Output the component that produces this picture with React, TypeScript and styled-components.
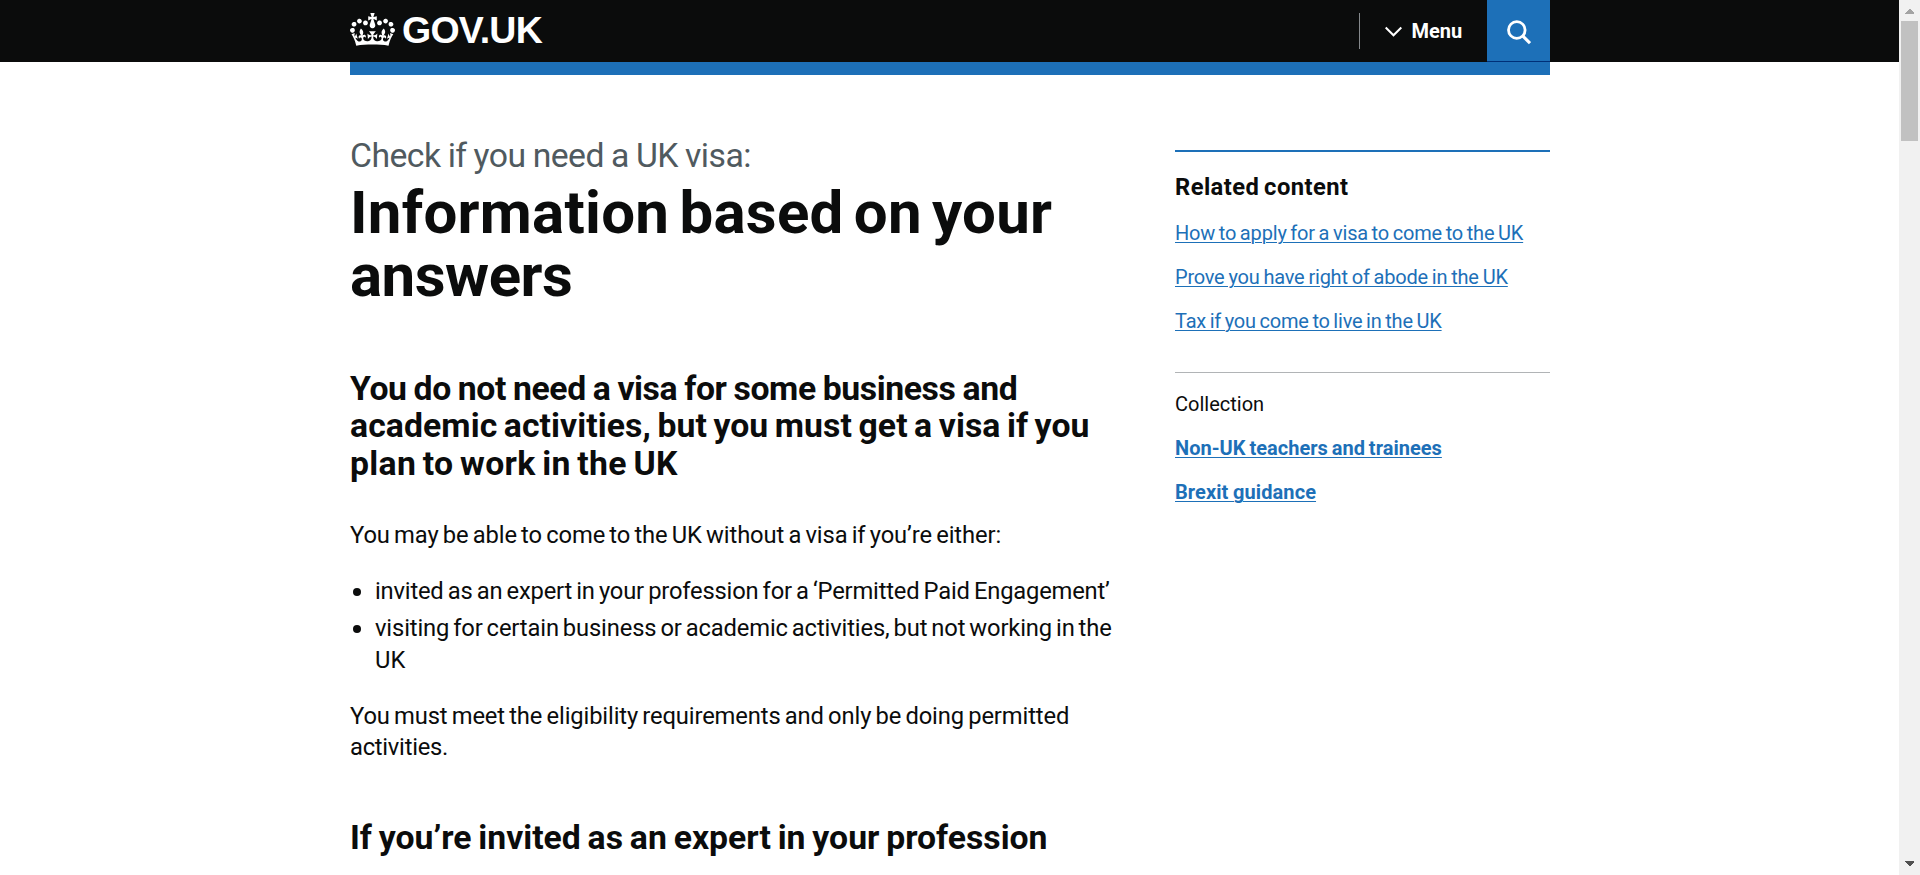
import React from 'react';
import styled, { createGlobalStyle } from 'styled-components';

const ink = '#0b0c0c';
const blue = '#1d70b8';

const GlobalStyle = createGlobalStyle`
  *, *::before, *::after { box-sizing: border-box; }
  body { margin: 0; background: #fff; color: ${ink}; font-family: Roboto, "Liberation Sans", sans-serif; }
  h1, h2, p, ul { margin: 0; padding: 0; font-weight: inherit; }
`;

const Viewport = styled.div`
  display: flex;
  height: 875px;
  overflow: hidden;
`;

const Page = styled.div`
  flex: 1;
  min-width: 0;
`;

const Header = styled.header`
  height: 62px;
  background: ${ink};
`;

const Container = styled.div`
  width: 1200px;
  margin-left: 350px;
`;

const HeaderBar = styled(Container)`
  display: flex;
  align-items: flex-start;
  height: 62px;
  color: #fff;
`;

const HomeLink = styled.a`
  display: flex;
  align-items: flex-start;
  gap: 7px;
  padding-top: 13px;
  color: #fff;
`;

const Wordmark = styled.span`
  font-family: "Liberation Sans", Arial, sans-serif;
  font-size: 37.5px;
  font-weight: 700;
  line-height: 34px;
  letter-spacing: -0.75px;
`;

const Nav = styled.nav`
  display: flex;
  align-items: center;
  height: 62px;
  margin-left: auto;
`;

const MenuButton = styled.div`
  display: flex;
  align-items: center;
  gap: 10px;
  width: 128px;
  height: 36px;
  padding-left: 24.5px;
  border-left: 1px solid #85898c;
  font-size: 20px;
  font-weight: 700;
  line-height: 36px;
`;

const SearchButton = styled.div`
  display: flex;
  align-items: center;
  justify-content: center;
  width: 63px;
  height: 62px;
  padding-top: 3px;
  background: ${blue};
  border-bottom: 1px solid #003078;
`;

const BlueBar = styled(Container)`
  height: 13px;
  background: ${blue};
`;

const Columns = styled(Container)`
  display: flex;
  justify-content: space-between;
`;

const Main = styled.main`
  width: 775px;
  padding-top: 61.5px;
`;

const Sidebar = styled.aside`
  width: 375px;
  padding-top: 75px;
`;

const Line = styled.span<{ $ls?: number; $ws?: number }>`
  display: block;
  white-space: nowrap;
  letter-spacing: ${({ $ls = 0 }) => $ls}px;
  word-spacing: ${({ $ws = 0 }) => $ws}px;
`;

const Caption = styled.p`
  margin-bottom: 8px;
  color: #505a5f;
  font-size: 33.75px;
  line-height: 37.5px;
`;

const Title = styled.h1`
  margin-bottom: 62.5px;
  font-size: 60px;
  font-weight: 700;
  line-height: 62.5px;
`;

const Heading = styled.h2`
  margin-bottom: 37.5px;
  font-size: 33.75px;
  font-weight: 700;
  line-height: 37.5px;
`;

const Paragraph = styled.p<{ $gap: number }>`
  margin-bottom: ${({ $gap }) => $gap}px;
  font-size: 23.75px;
  line-height: 31.25px;
`;

const Bullets = styled.ul`
  display: flex;
  flex-direction: column;
  gap: 6.25px;
  margin-bottom: 25px;
  list-style: none;
  font-size: 23.75px;
  line-height: 31.25px;
`;

const Bullet = styled.li`
  display: flex;
  gap: 14px;
  padding-left: 3px;

  &::before {
    content: '';
    flex: none;
    width: 8px;
    height: 8px;
    margin-top: 12px;
    border-radius: 50%;
    background: ${ink};
  }
`;

const Related = styled.section`
  padding: 20px 0 38px;
  border-top: 2px solid ${blue};
`;

const RelatedTitle = styled.h2`
  margin-bottom: 18px;
  font-size: 23.75px;
  font-weight: 700;
  line-height: 31.25px;
`;

const Collection = styled.section`
  display: flex;
  flex-direction: column;
  gap: 19px;
  padding-top: 19px;
  border-top: 1px solid #b1b4b6;
  font-size: 20px;
  line-height: 25px;
`;

const LinkList = styled.div`
  display: flex;
  flex-direction: column;
  align-items: flex-start;
  gap: 19px;
`;

const SideLink = styled.a<{ $ls: number; $ws: number; $bold?: boolean }>`
  color: ${blue};
  font-size: 20px;
  font-weight: ${({ $bold }) => ($bold ? 700 : 400)};
  line-height: 25px;
  letter-spacing: ${({ $ls }) => $ls}px;
  word-spacing: ${({ $ws }) => $ws}px;
  white-space: nowrap;
  text-decoration: underline;
  text-decoration-thickness: 1px;
  text-underline-offset: 2px;
`;

const Scrollbar = styled.div`
  display: flex;
  flex-direction: column;
  align-items: center;
  width: 21px;
  height: 875px;
  padding: 9px 0;
  background: #f1f1f1;
`;

const Thumb = styled.div`
  width: 17px;
  height: 120px;
  margin: 7px 0 auto;
  background: #c1c1c1;
`;

const ScrollArrow = ({ down }: { down?: boolean }) => (
  <svg width="9" height="5" viewBox="0 0 9 5" shapeRendering="crispEdges">
    <path d={down ? 'M0 0H9V1L5 5H4L0 1Z' : 'M0 5H9V4L5 0H4L0 4Z'} fill={down ? '#505050' : '#a3a3a3'} />
  </svg>
);

const Crown = () => (
  <svg width="45" height="33" viewBox="0 0 132 97" fill="#fff" aria-hidden="true">
    <path d="M25 30.2c3.5 1.5 7.7-.2 9.1-3.7 1.5-3.6-.2-7.8-3.9-9.2-3.6-1.4-7.6.3-9.1 3.9-1.4 3.5.3 7.5 3.9 9zM9 39.5c3.6 1.5 7.8-.2 9.2-3.7 1.5-3.6-.2-7.8-3.9-9.1-3.6-1.5-7.6.2-9.1 3.8-1.4 3.5.3 7.5 3.8 9zM4.4 57.2c3.5 1.5 7.7-.2 9.1-3.8 1.5-3.6-.2-7.7-3.9-9.1-3.5-1.5-7.6.3-9.1 3.8-1.4 3.5.3 7.6 3.9 9.1zm38.3-21.4c3.5 1.5 7.7-.2 9.1-3.8 1.5-3.6-.2-7.7-3.9-9.1-3.6-1.5-7.6.3-9.1 3.8-1.3 3.6.4 7.7 3.9 9.1zm64.4-5.6c-3.6 1.5-7.8-.2-9.1-3.7-1.5-3.6.2-7.8 3.8-9.2 3.6-1.4 7.7.3 9.2 3.9 1.3 3.5-.4 7.5-3.9 9zm15.9 9.3c-3.6 1.5-7.7-.2-9.1-3.7-1.5-3.6.2-7.8 3.7-9.1 3.6-1.5 7.7.2 9.2 3.8 1.5 3.5-.3 7.5-3.8 9zm4.7 17.7c-3.6 1.5-7.8-.2-9.2-3.8-1.5-3.6.2-7.7 3.9-9.1 3.6-1.5 7.7.3 9.2 3.8 1.3 3.5-.4 7.6-3.9 9.1zM89.3 35.8c-3.6 1.5-7.8-.2-9.2-3.8-1.4-3.6.2-7.7 3.9-9.1 3.6-1.5 7.7.3 9.2 3.8 1.4 3.6-.3 7.7-3.9 9.1zM69.7 17.7l8.9 4.7V9.3l-8.9 2.8c-.2-.3-.5-.6-.9-.9L72.4 0H59.6l3.5 11.2c-.3.3-.6.5-.9.9l-8.8-2.8v13.1l8.8-4.7c.3.3.6.7.9.9l-5 15.4v.1c-.2.8-.4 1.6-.4 2.4 0 4.1 3.1 7.5 7 8.1h.2c.3 0 .7.1 1 .1.4 0 .7 0 1-.1h.2c4-.6 7.1-4.1 7.1-8.1 0-.8-.1-1.7-.4-2.4V34l-5.1-15.4c.4-.2.7-.6 1-.9zM66 92.8c16.9 0 32.8 1.1 47.1 3.2 4-16.9 8.9-26.7 14-33.5l-9.6-3.4c1 4.9 1.1 7.2 0 10.2-1.5-1.4-3-4.3-4.2-8.7L108.6 76c2.8-2 5-3.2 7.5-3.3-4.4 9.4-10 11.9-13.6 11.2-4.3-.8-6.3-4.6-5.6-7.9 1-4.7 5.7-5.9 8-.5 4.3-8.7-3-11.4-7.6-8.8 7.1-7.2 7.9-13.5 2.1-21.1-8 6.1-8.1 12.3-4.5 20.8-4.7-5.4-12.1-2.5-9.5 6.2 3.4-5.2 7.9-2 7.2 3.1-.6 4.3-6.4 7.8-13.5 7.2-10.3-.9-10.9-8-11.2-13.8 2.5-.5 7.1 1.8 11 7.3L80.2 60c-4.1 4.4-8 5.3-12.3 5.4 1.4-4.4 8-11.6 8-11.6H55.5s6.4 7.2 7.9 11.6c-4.2-.1-8-1-12.3-5.4l1.4 16.4c3.9-5.5 8.5-7.7 10.9-7.3-.3 5.8-.9 12.8-11.1 13.8-7.2.6-12.9-2.9-13.5-7.2-.7-5 3.8-8.3 7.1-3.1 2.7-8.7-4.6-11.6-9.4-6.2 3.7-8.5 3.6-14.7-4.6-20.8-5.8 7.6-5 13.9 2.2 21.1-4.7-2.6-11.9.1-7.7 8.8 2.3-5.5 7.1-4.2 8.1.5.7 3.3-1.3 7.1-5.7 7.9-3.5.7-9-1.8-13.5-11.2 2.5.1 4.7 1.3 7.5 3.3l-4.7-15.4c-1.2 4.4-2.7 7.2-4.3 8.7-1.1-3-.9-5.3 0-10.2l-9.5 3.4c5 6.9 9.9 16.7 14 33.5 14.8-2.1 30.8-3.2 47.7-3.2z" />
  </svg>
);

const Chevron = () => (
  <svg width="17" height="12" viewBox="0 0 17 12" fill="none" stroke="#fff" strokeWidth="2">
    <path d="M.7 2.5 8.5 10.3 16.3 2.5" />
  </svg>
);

const SearchIcon = () => (
  <svg width="25" height="25" viewBox="0 0 25 25" fill="none" stroke="#fff" strokeWidth="2.8">
    <circle cx="10.8" cy="10" r="8.3" />
    <path d="M16.5 15.7 24 23.2" strokeWidth="3.2" />
  </svg>
);

export default function App() {
  return (
    <>
      <GlobalStyle />
      <Viewport>
        <Page>
          <Header>
            <HeaderBar>
              <HomeLink>
                <Crown />
                <Wordmark>GOV.UK</Wordmark>
              </HomeLink>
              <Nav>
                <MenuButton>
                  <Chevron />
                  Menu
                </MenuButton>
                <SearchButton>
                  <SearchIcon />
                </SearchButton>
              </Nav>
            </HeaderBar>
          </Header>
          <BlueBar />
          <Columns>
            <Main>
              <Caption>
                <Line $ls={-0.54} $ws={-0.73}>Check if you need a UK visa:</Line>
              </Caption>
              <Title>
                <Line $ls={0.27} $ws={-5}>Information based on your</Line>
                <Line $ls={-0.5}>answers</Line>
              </Title>
              <Heading>
                <Line $ls={-0.4} $ws={-1}>You do not need a visa for some business and</Line>
                <Line $ls={0.08} $ws={-2}>academic activities, but you must get a visa if you</Line>
                <Line $ls={0.3} $ws={-2}>plan to work in the UK</Line>
              </Heading>
              <Paragraph $gap={25}>
                <Line $ls={-0.1} $ws={-1.6}>You may be able to come to the UK without a visa if you’re either:</Line>
              </Paragraph>
              <Bullets>
                <Bullet>
                  <Line $ls={-0.194} $ws={-1.51}>invited as an expert in your profession for a ‘Permitted Paid Engagement’</Line>
                </Bullet>
                <Bullet>
                  <div>
                    <Line $ls={-0.135} $ws={-1.8}>visiting for certain business or academic activities, but not working in the</Line>
                    <Line>UK</Line>
                  </div>
                </Bullet>
              </Bullets>
              <Paragraph $gap={56}>
                <Line $ls={-0.13} $ws={-1.5}>You must meet the eligibility requirements and only be doing permitted</Line>
                <Line $ls={-0.257}>activities.</Line>
              </Paragraph>
              <Heading>
                <Line $ls={-0.01} $ws={-1.52}>If you’re invited as an expert in your profession</Line>
              </Heading>
            </Main>
            <Sidebar>
              <Related>
                <RelatedTitle>
                  <Line $ls={0.43} $ws={-1.5}>Related content</Line>
                </RelatedTitle>
                <LinkList>
                  <SideLink $ls={-0.16} $ws={-1.2}>How to apply for a visa to come to the UK</SideLink>
                  <SideLink $ls={-0.24} $ws={-0.7}>Prove you have right of abode in the UK</SideLink>
                  <SideLink $ls={-0.18} $ws={-1.2}>Tax if you come to live in the UK</SideLink>
                </LinkList>
              </Related>
              <Collection>
                <Line>Collection</Line>
                <LinkList>
                  <SideLink $bold $ls={0.023} $ws={-1.13}>Non-UK teachers and trainees</SideLink>
                  <SideLink $bold $ls={0.08} $ws={-0.4}>Brexit guidance</SideLink>
                </LinkList>
              </Collection>
            </Sidebar>
          </Columns>
        </Page>
        <Scrollbar>
          <ScrollArrow />
          <Thumb />
          <ScrollArrow down />
        </Scrollbar>
      </Viewport>
    </>
  );
}
